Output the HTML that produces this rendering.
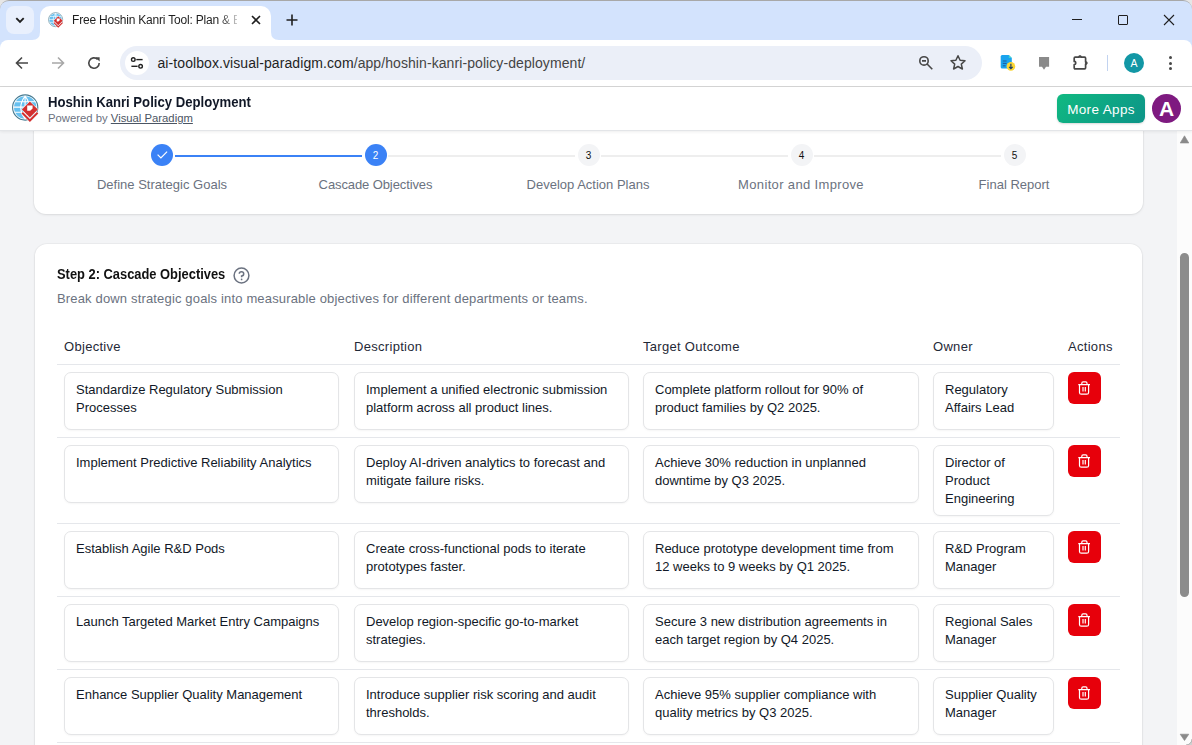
<!DOCTYPE html>
<html><head><meta charset="utf-8">
<style>
*{box-sizing:border-box;margin:0;padding:0}
html,body{width:1192px;height:745px;overflow:hidden;background:#f3f4f6;font-family:"Liberation Sans",sans-serif}
.abs{position:absolute}
#tabstrip{left:0;top:0;width:1192px;height:40px;background:#d3e3fd;border-top:1px solid #a8a8a8;border-radius:9px 9px 0 0}
#toolbar{left:0;top:40px;width:1192px;height:47px;background:#fff;border-bottom:1px solid #d6d6d6;border-radius:8px 8px 0 0}
#header{left:0;top:87px;width:1192px;height:44px;background:#fff;border-bottom:1px solid #e3e5e8;box-shadow:0 1px 3px rgba(0,0,0,.07)}
.card{background:#fff;border-radius:12px;box-shadow:0 1px 3px rgba(0,0,0,.08),0 0 0 1px rgba(0,0,0,.03)}
.step-lbl{position:absolute;top:177px;font-size:13px;color:#6b7280;white-space:nowrap;transform:translateX(-50%)}
.circ{position:absolute;top:144px;width:22px;height:22px;border-radius:50%;font-size:10px;line-height:23.5px;text-align:center;transform:translateX(-50%)}
.th{position:absolute;top:339px;font-size:13px;letter-spacing:0.3px;color:#1f2937;white-space:nowrap}
.ta{position:absolute;border:1px solid #e4e5e7;border-radius:7px;box-shadow:0 1px 2px rgba(0,0,0,.04);background:#fff;font-size:13px;line-height:18px;color:#111827;padding:8px 11px;white-space:normal}
.sep{position:absolute;left:57px;width:1063px;height:1px;background:#e5e7eb}
.del{position:absolute;left:1068px;width:33px;height:32px;border-radius:6px;background:#e7000b}
</style></head>
<body>
<!-- Chrome tab strip -->
<div class="abs" style="left:0;top:0;width:1192px;height:12px;background:#e6e6e6"></div>
<div id="tabstrip" class="abs"></div>
<div class="abs" style="left:6px;top:6px;width:28px;height:28px;border-radius:8px;background:#e9f0fd"></div>
<svg class="abs" style="left:14px;top:14px" width="12" height="12" viewBox="0 0 12 12"><path d="M2.3 4.2 L6 7.9 L9.7 4.2" fill="none" stroke="#1f1f1f" stroke-width="1.9"/></svg>
<!-- active tab -->
<div class="abs" style="left:40px;top:6px;width:231px;height:34px;background:#fff;border-radius:10px 10px 0 0"></div>
<svg class="abs" style="left:32px;top:32px" width="8" height="8"><path d="M0 8 Q8 8 8 0 L8 8 Z" fill="#fff"/></svg>
<svg class="abs" style="left:271px;top:32px" width="8" height="8"><path d="M8 8 Q0 8 0 0 L0 8 Z" fill="#fff"/></svg>
<svg class="abs" style="left:46px;top:10.8px" width="19" height="19"><use href="#vplogo"/></svg>
<div class="abs" id="tabtitle" style="left:72px;top:12px;width:165px;height:18px;font-size:12px;letter-spacing:-0.2px;line-height:16px;color:#1f1f1f;white-space:nowrap;overflow:hidden;-webkit-mask-image:linear-gradient(to right,#000 148px,transparent 170px)">Free Hoshin Kanri Tool: Plan &amp; Execute</div>
<svg class="abs" style="left:250px;top:14px" width="12" height="12" viewBox="0 0 12 12"><path d="M2 2 L10 10 M10 2 L2 10" stroke="#1f1f1f" stroke-width="1.6"/></svg>
<svg class="abs" style="left:285px;top:13px" width="14" height="14" viewBox="0 0 14 14"><path d="M7 1.5 V12.5 M1.5 7 H12.5" stroke="#1f1f1f" stroke-width="1.6"/></svg>
<!-- window controls -->
<div class="abs" style="left:1072px;top:19px;width:10px;height:1px;background:#1f1f1f"></div>
<div class="abs" style="left:1118px;top:15px;width:10px;height:10px;border:1px solid #1f1f1f;border-radius:1px"></div>
<svg class="abs" style="left:1163px;top:14px" width="12" height="12" viewBox="0 0 12 12"><path d="M1 1 L11 11 M11 1 L1 11" stroke="#1f1f1f" stroke-width="1.1"/></svg>

<!-- toolbar -->
<div class="abs" style="left:0;top:40px;width:1192px;height:10px;background:#d3e3fd"></div>
<div id="toolbar" class="abs"></div>
<svg class="abs" style="left:14px;top:55px" width="16" height="16" viewBox="0 0 16 16"><path d="M14 8 H2.5 M8 2.5 L2.5 8 L8 13.5" fill="none" stroke="#474747" stroke-width="1.6"/></svg>
<svg class="abs" style="left:50px;top:55px" width="16" height="16" viewBox="0 0 16 16"><path d="M2 8 H13.5 M8 2.5 L13.5 8 L8 13.5" fill="none" stroke="#a8a8a8" stroke-width="1.6"/></svg>
<svg class="abs" style="left:86px;top:55px" width="16" height="16" viewBox="0 0 16 16"><path d="M13.2 8 A5.2 5.2 0 1 1 11.6 4.3" fill="none" stroke="#474747" stroke-width="1.6"/><path d="M9.2 2.2 H13.6 V6.6 Z" fill="#474747"/></svg>
<div class="abs" style="left:120px;top:46px;width:862px;height:34px;border-radius:17px;background:#ebeff8"></div>
<div class="abs" style="left:125px;top:51px;width:24px;height:24px;border-radius:50%;background:#fff"></div>
<svg class="abs" style="left:129px;top:55px" width="16" height="16" viewBox="0 0 16 16"><circle cx="4.3" cy="4.6" r="1.8" fill="none" stroke="#222" stroke-width="1.4"/><path d="M7.3 4.6 H13.6" stroke="#222" stroke-width="1.4"/><circle cx="11.6" cy="11.3" r="1.8" fill="none" stroke="#222" stroke-width="1.4"/><path d="M2.4 11.3 H8.6" stroke="#222" stroke-width="1.4"/></svg>
<div class="abs" style="left:157.5px;top:54px;font-size:14px;letter-spacing:0.08px;line-height:18px;white-space:nowrap;color:#1f1f1f">ai-toolbox.visual-paradigm.com<span style="color:#444">/app/hoshin-kanri-policy-deployment/</span></div>
<svg class="abs" style="left:917px;top:55px" width="18" height="18" viewBox="0 0 18 18"><circle cx="7" cy="5.9" r="4.2" fill="none" stroke="#474747" stroke-width="1.6"/><path d="M5 5.9 H9 M10.1 9 L15.3 14.2" stroke="#474747" stroke-width="1.6"/></svg>
<svg class="abs" style="left:949px;top:54px" width="18" height="18" viewBox="0 0 18 18"><path d="M9 1.8 L11.1 6.3 L16 6.8 L12.3 10.1 L13.4 15 L9 12.5 L4.6 15 L5.7 10.1 L2 6.8 L6.9 6.3 Z" fill="none" stroke="#474747" stroke-width="1.5" stroke-linejoin="round"/></svg>
<!-- extensions -->
<svg class="abs" style="left:999px;top:54px" width="18" height="18" viewBox="0 0 18 18"><path d="M3.2 1 H9.8 L12.8 4 V13 Q12.8 14.5 11.3 14.5 H3.2 Q1.7 14.5 1.7 13 V2.5 Q1.7 1 3.2 1 Z" fill="#19a3ee"/><path d="M9.8 1 L12.8 4 H9.8 Z" fill="#3fd6d0"/><path d="M3.8 7 H7.6 M3.8 9.4 H7.6 M3.8 11.8 H6.6" stroke="#1b5c9e" stroke-width="1"/><circle cx="11.9" cy="12.4" r="4.3" fill="#fbd634"/><path d="M11.9 9.8 V14.6 M10.1 12.9 L11.9 14.7 L13.7 12.9" fill="none" stroke="#1d3e66" stroke-width="1.2"/></svg>
<svg class="abs" style="left:1036px;top:55px" width="16" height="16" viewBox="0 0 16 16"><path d="M3 2.1 H13.1 V11.8 H10 L8 14.7 L6 11.8 H3 Z" fill="#8a8a8a"/></svg>
<svg class="abs" style="left:1072px;top:54px" width="18" height="18" viewBox="0 0 18 18"><path d="M3.2 3.15 H6.9 A1.1 1.1 0 0 1 9.1 3.15 H12.6 Q13.6 3.15 13.6 4.15 V7.9 A1.1 1.1 0 0 1 13.6 10.1 V13.85 Q13.6 14.85 12.6 14.85 H3.2 Q2.2 14.85 2.2 13.85 V10.6 A1.6 1.6 0 0 0 2.2 7.4 V4.15 Q2.2 3.15 3.2 3.15 Z" fill="none" stroke="#474747" stroke-width="1.7" stroke-linejoin="round"/><circle cx="8" cy="2.6" r="1.2" fill="#474747"/><circle cx="14.2" cy="9" r="1.2" fill="#474747"/></svg>
<div class="abs" style="left:1107px;top:55px;width:1px;height:16px;background:#c2d3f0"></div>
<div class="abs" style="left:1124px;top:53px;width:20px;height:20px;border-radius:50%;background:#1297a5;color:#fff;font-size:10.5px;line-height:20px;text-align:center">A</div>
<div class="abs" style="left:1168.5px;top:56px;width:3px;height:3px;border-radius:50%;background:#474747"></div>
<div class="abs" style="left:1168.5px;top:61.5px;width:3px;height:3px;border-radius:50%;background:#474747"></div>
<div class="abs" style="left:1168.5px;top:67px;width:3px;height:3px;border-radius:50%;background:#474747"></div>

<!-- page content -->
<div class="abs card" style="left:34px;top:100px;width:1109px;height:114px"></div>

<!-- stepper -->
<div class="abs" style="left:175px;top:155px;width:187px;height:2px;background:#3b82f6"></div>
<div class="abs" style="left:388px;top:155px;width:187px;height:2px;background:#eeeeee"></div>
<div class="abs" style="left:601px;top:155px;width:187px;height:2px;background:#eeeeee"></div>
<div class="abs" style="left:814px;top:155px;width:187px;height:2px;background:#eeeeee"></div>
<div class="circ" style="left:162px;background:#3b82f6"><svg width="22" height="22" viewBox="0 0 22 22" style="display:block"><path d="M6.6 10.6 L9.9 13.9 L16.1 7.7" fill="none" stroke="#fff" stroke-width="1.2"/></svg></div>
<div class="circ" style="left:375.5px;background:#3b82f6;color:#fff">2</div>
<div class="circ" style="left:588.5px;background:#f3f4f6;color:#111">3</div>
<div class="circ" style="left:801.5px;background:#f3f4f6;color:#111">4</div>
<div class="circ" style="left:1014.5px;background:#f3f4f6;color:#111">5</div>
<div class="step-lbl" style="left:162px">Define Strategic Goals</div>
<div class="step-lbl" style="left:375.5px;letter-spacing:-0.1px">Cascade Objectives</div>
<div class="step-lbl" style="left:588px">Develop Action Plans</div>
<div class="step-lbl" style="left:801px;letter-spacing:0.35px">Monitor and Improve</div>
<div class="step-lbl" style="left:1014px">Final Report</div>

<!-- main card -->
<div class="abs card" style="left:35px;top:244px;width:1107px;height:560px"></div>
<div class="abs" style="left:57px;top:265.5px;font-size:14px;font-weight:bold;color:#111;white-space:nowrap;transform:scaleX(0.92);transform-origin:0 0">Step 2: Cascade Objectives</div>
<svg class="abs" style="left:232.5px;top:266.5px" width="17" height="17" viewBox="0 0 17 17"><circle cx="8.5" cy="8.5" r="7.4" fill="none" stroke="#6b7280" stroke-width="1.5"/><path d="M6.3 6.8 A2.2 2.1 0 1 1 8.6 8.9 V10.2" fill="none" stroke="#6b7280" stroke-width="1.5"/><circle cx="8.6" cy="12.4" r="0.85" fill="#6b7280"/></svg>
<div class="abs" style="left:57px;top:291px;font-size:13px;letter-spacing:0.16px;color:#6b7280;white-space:nowrap">Break down strategic goals into measurable objectives for different departments or teams.</div>

<div class="th" style="left:64px">Objective</div>
<div class="th" style="left:354px">Description</div>
<div class="th" style="left:643px">Target Outcome</div>
<div class="th" style="left:933px">Owner</div>
<div class="th" style="left:1068px">Actions</div>
<div class="sep" style="top:364px"></div>

<div id="rows">
<div class="ta" style="left:64px;top:372px;width:275px;height:58px">Standardize Regulatory Submission<br>Processes</div>
<div class="ta" style="left:354px;top:372px;width:275px;height:58px">Implement a unified electronic submission<br>platform across all product lines.</div>
<div class="ta" style="left:643px;top:372px;width:276px;height:58px">Complete platform rollout for 90% of<br>product families by Q2 2025.</div>
<div class="ta" style="left:933px;top:372px;width:121px;height:58px">Regulatory<br>Affairs Lead</div>
<div class="del" style="top:372px"><svg width="33" height="33" viewBox="0 0 33 33" style="display:block"><path d="M10.3 12.6 H22 M13.8 12.4 V11.2 Q13.8 9.9 15.1 9.9 H17.7 Q19 9.9 19 11.2 V12.4 M11.5 12.8 V20.4 Q11.5 22.2 13.3 22.2 H18.8 Q20.6 22.2 20.6 20.4 V12.8 M15 15 V19.6 M17.3 15 V19.6" fill="none" stroke="#fff" stroke-width="1.2" stroke-linejoin="round"/></svg></div>
<div class="sep" style="top:437px"></div>
<div class="ta" style="left:64px;top:445px;width:275px;height:58px">Implement Predictive Reliability Analytics</div>
<div class="ta" style="left:354px;top:445px;width:275px;height:58px">Deploy AI-driven analytics to forecast and<br>mitigate failure risks.</div>
<div class="ta" style="left:643px;top:445px;width:276px;height:58px">Achieve 30% reduction in unplanned<br>downtime by Q3 2025.</div>
<div class="ta" style="left:933px;top:445px;width:121px;height:71px">Director of<br>Product<br>Engineering</div>
<div class="del" style="top:445px"><svg width="33" height="33" viewBox="0 0 33 33" style="display:block"><path d="M10.3 12.6 H22 M13.8 12.4 V11.2 Q13.8 9.9 15.1 9.9 H17.7 Q19 9.9 19 11.2 V12.4 M11.5 12.8 V20.4 Q11.5 22.2 13.3 22.2 H18.8 Q20.6 22.2 20.6 20.4 V12.8 M15 15 V19.6 M17.3 15 V19.6" fill="none" stroke="#fff" stroke-width="1.2" stroke-linejoin="round"/></svg></div>
<div class="sep" style="top:523px"></div>
<div class="ta" style="left:64px;top:531px;width:275px;height:58px">Establish Agile R&amp;D Pods</div>
<div class="ta" style="left:354px;top:531px;width:275px;height:58px">Create cross-functional pods to iterate<br>prototypes faster.</div>
<div class="ta" style="left:643px;top:531px;width:276px;height:58px">Reduce prototype development time from<br>12 weeks to 9 weeks by Q1 2025.</div>
<div class="ta" style="left:933px;top:531px;width:121px;height:58px">R&amp;D Program<br>Manager</div>
<div class="del" style="top:531px"><svg width="33" height="33" viewBox="0 0 33 33" style="display:block"><path d="M10.3 12.6 H22 M13.8 12.4 V11.2 Q13.8 9.9 15.1 9.9 H17.7 Q19 9.9 19 11.2 V12.4 M11.5 12.8 V20.4 Q11.5 22.2 13.3 22.2 H18.8 Q20.6 22.2 20.6 20.4 V12.8 M15 15 V19.6 M17.3 15 V19.6" fill="none" stroke="#fff" stroke-width="1.2" stroke-linejoin="round"/></svg></div>
<div class="sep" style="top:596px"></div>
<div class="ta" style="left:64px;top:604px;width:275px;height:58px">Launch Targeted Market Entry Campaigns</div>
<div class="ta" style="left:354px;top:604px;width:275px;height:58px">Develop region-specific go-to-market<br>strategies.</div>
<div class="ta" style="left:643px;top:604px;width:276px;height:58px">Secure 3 new distribution agreements in<br>each target region by Q4 2025.</div>
<div class="ta" style="left:933px;top:604px;width:121px;height:58px">Regional Sales<br>Manager</div>
<div class="del" style="top:604px"><svg width="33" height="33" viewBox="0 0 33 33" style="display:block"><path d="M10.3 12.6 H22 M13.8 12.4 V11.2 Q13.8 9.9 15.1 9.9 H17.7 Q19 9.9 19 11.2 V12.4 M11.5 12.8 V20.4 Q11.5 22.2 13.3 22.2 H18.8 Q20.6 22.2 20.6 20.4 V12.8 M15 15 V19.6 M17.3 15 V19.6" fill="none" stroke="#fff" stroke-width="1.2" stroke-linejoin="round"/></svg></div>
<div class="sep" style="top:669px"></div>
<div class="ta" style="left:64px;top:677px;width:275px;height:58px">Enhance Supplier Quality Management</div>
<div class="ta" style="left:354px;top:677px;width:275px;height:58px">Introduce supplier risk scoring and audit<br>thresholds.</div>
<div class="ta" style="left:643px;top:677px;width:276px;height:58px">Achieve 95% supplier compliance with<br>quality metrics by Q3 2025.</div>
<div class="ta" style="left:933px;top:677px;width:121px;height:58px">Supplier Quality<br>Manager</div>
<div class="del" style="top:677px"><svg width="33" height="33" viewBox="0 0 33 33" style="display:block"><path d="M10.3 12.6 H22 M13.8 12.4 V11.2 Q13.8 9.9 15.1 9.9 H17.7 Q19 9.9 19 11.2 V12.4 M11.5 12.8 V20.4 Q11.5 22.2 13.3 22.2 H18.8 Q20.6 22.2 20.6 20.4 V12.8 M15 15 V19.6 M17.3 15 V19.6" fill="none" stroke="#fff" stroke-width="1.2" stroke-linejoin="round"/></svg></div>
<div class="sep" style="top:742px"></div>
</div>

<!-- scrollbar -->
<div class="abs" style="left:1177px;top:130px;width:15px;height:615px;background:#fcfcfc"></div>
<svg class="abs" style="left:1179px;top:135px" width="11" height="9" viewBox="0 0 11 9"><path d="M1.2 8 L5.5 0.8 L9.8 8 Z" fill="#8a8a8a" stroke="#8a8a8a" stroke-width="0.6" stroke-linejoin="round"/></svg>
<svg class="abs" style="left:1179px;top:733px" width="11" height="9" viewBox="0 0 11 9"><path d="M1.2 1.2 L9.8 1.2 L5.5 7.6 Z" fill="#8a8a8a" stroke="#8a8a8a" stroke-width="0.6" stroke-linejoin="round"/></svg>
<svg class="abs" style="left:1186px;top:739px" width="6" height="6" viewBox="0 0 6 6"><path d="M6 0 A6 6 0 0 1 0 6 L6 6 Z" fill="#d0d0d0"/><path d="M6 0 A6 6 0 0 1 0 6" fill="none" stroke="#a0a0a0" stroke-width="0.8"/></svg>
<div class="abs" style="left:1180px;top:253px;width:9px;height:344px;border-radius:5px;background:#8c8c8c"></div>
<!-- app header -->
<div id="header" class="abs"></div>
<svg width="0" height="0" style="position:absolute"><defs>
<symbol id="vplogo" viewBox="0 0 34 34">
<circle cx="17.2" cy="15.5" r="12.6" fill="#fff" stroke="#467a90" stroke-width="1.1"/>
<circle cx="17.2" cy="15.5" r="11.2" fill="#66c0f0"/>
<path d="M5.5 15.1 H29 M7 9.8 H27.5 M7 20.3 H27.5 M17.1 4 V27 M17.1 4 Q8.5 15.5 17.1 27 M17.1 4 Q25.7 15.5 17.1 27" fill="none" stroke="#fff" stroke-width="1.1"/>
<path d="M13.4 17.6 L21.9 9.1 L30.4 17.6 L21.9 26.1 Z" fill="#fff"/>
<path d="M13.9 17.6 L21.9 9.6 L29.9 17.6 L21.9 25.6 Z" fill="#d32f2f"/>
<path d="M19.2 13.4 H24.6 V16.4 L22.2 18.8 H19.2 Z" fill="#fff"/>
<path d="M14.2 20.6 L21.9 28.3 L29.6 20.6" fill="none" stroke="#fff" stroke-width="3.2"/>
<path d="M14.2 20.8 L21.9 28.5 L29.6 20.8" fill="none" stroke="#d32f2f" stroke-width="2"/>
</symbol></defs></svg>
<svg class="abs" style="left:8px;top:92px" width="34" height="34"><use href="#vplogo"/></svg>
<div class="abs" style="left:48px;top:94px;font-size:14px;font-weight:bold;color:#111827;white-space:nowrap;transform:scaleX(0.938);transform-origin:0 0">Hoshin Kanri Policy Deployment</div>
<div class="abs" style="left:48px;top:112px;font-size:11.3px;color:#6b7280;white-space:nowrap">Powered by <span style="color:#4b5563;text-decoration:underline">Visual Paradigm</span></div>
<div class="abs" style="left:1057px;top:94px;width:88px;height:29px;border-radius:6px;background:linear-gradient(135deg,#10b981,#0d9488);color:#fff;font-size:13.5px;letter-spacing:0.35px;line-height:31px;text-align:center;box-shadow:0 1px 2px rgba(0,0,0,.15)">More Apps</div>
<div class="abs" style="left:1152px;top:94px;width:29px;height:29px;border-radius:50%;background:#7e1a80;color:#fff;font-size:21px;font-weight:bold;line-height:30px;text-align:center">A</div>

</body></html>
